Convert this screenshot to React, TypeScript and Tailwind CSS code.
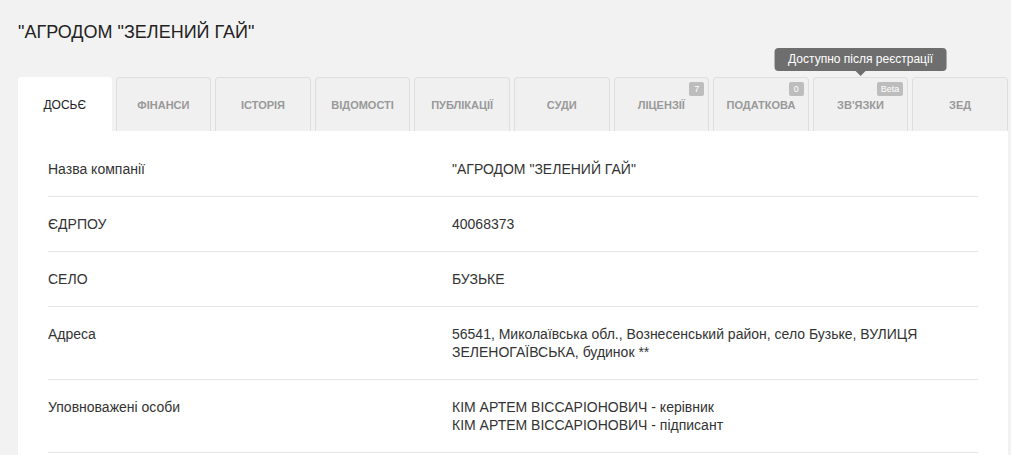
import React from 'react';

type Tab = {
  label: string;
  badge?: string;
  tooltip?: string;
};

const tabs: Tab[] = [
  { label: 'ДОСЬЄ' },
  { label: 'ФІНАНСИ' },
  { label: 'ІСТОРІЯ' },
  { label: 'ВІДОМОСТІ' },
  { label: 'ПУБЛІКАЦІЇ' },
  { label: 'СУДИ' },
  { label: 'ЛІЦЕНЗІЇ', badge: '7' },
  { label: 'ПОДАТКОВА', badge: '0' },
  { label: "ЗВ'ЯЗКИ", badge: 'Beta', tooltip: 'Доступно після реєстрації' },
  { label: 'ЗЕД' },
];

const rows: { label: string; value: string[] }[] = [
  { label: 'Назва компанії', value: ['"АГРОДОМ "ЗЕЛЕНИЙ ГАЙ"'] },
  { label: 'ЄДРПОУ', value: ['40068373'] },
  { label: 'СЕЛО', value: ['БУЗЬКЕ'] },
  {
    label: 'Адреса',
    value: ['56541, Миколаївська обл., Вознесенський район, село Бузьке, ВУЛИЦЯ', 'ЗЕЛЕНОГАЇВСЬКА, будинок **'],
  },
  {
    label: 'Уповноважені особи',
    value: ['КІМ АРТЕМ ВІССАРІОНОВИЧ - керівник', 'КІМ АРТЕМ ВІССАРІОНОВИЧ - підписант'],
  },
];

export default function App() {
  return (
    <div
      className="min-h-screen bg-[#f2f2f2] px-[18px] pt-[22px] text-[#333]"
      style={{ fontFamily: '"Liberation Sans", Arial, sans-serif' }}
    >
      <h1 className="text-[18px] leading-[20px] text-[#222]">"АГРОДОМ "ЗЕЛЕНИЙ ГАЙ"</h1>

      {/* tabs */}
      <div className="mt-[35px] flex w-[990px] gap-[4px]">
        {tabs.map((tab, i) => {
          const active = i === 0;
          return (
            <div
              key={tab.label}
              className={
                active
                  ? 'relative flex h-[54px] flex-1 items-center justify-center rounded-t-[3px] bg-white text-[12px] text-[#222]'
                  : 'relative flex h-[54px] flex-1 items-center justify-center rounded-t-[4px] border border-b-0 border-[#dedede] bg-[#f0f0f0] text-[11px] font-bold text-[#999]'
              }
            >
              <span className="pt-[2px]">{tab.label}</span>
              {tab.badge && (
                <span className="absolute right-[4px] top-[4px] min-w-[15px] rounded-[2px] bg-[#bdbdbd] px-[4px] text-center text-[9px] font-normal leading-[14px] text-white">
                  {tab.badge}
                </span>
              )}
              {tab.tooltip && (
                <div className="absolute bottom-[60px] left-1/2 -translate-x-1/2 whitespace-nowrap rounded-[4px] bg-[#6e6e6e] px-[14px] text-[12px] font-normal leading-[23px] text-white">
                  {tab.tooltip}
                  <span className="absolute left-1/2 top-full h-0 w-0 -translate-x-1/2 border-x-[5px] border-t-[5px] border-x-transparent border-t-[#6e6e6e]" />
                </div>
              )}
            </div>
          );
        })}
      </div>

      {/* details panel */}
      <div className="w-[990px] bg-white px-[30px] pt-[11px] pb-[20px]">
        {rows.map((row) => (
          <div key={row.label} className="flex border-b border-[#e5e5e5] py-[18px] text-[14px] leading-[18px]">
            <div className="w-[404px] shrink-0">{row.label}</div>
            <div>
              {row.value.map((line) => (
                <div key={line}>{line}</div>
              ))}
            </div>
          </div>
        ))}
      </div>
    </div>
  );
}
